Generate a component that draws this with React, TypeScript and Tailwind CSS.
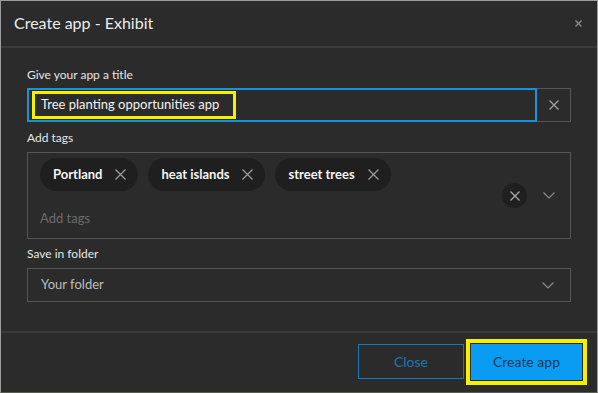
const XIcon = ({ size, color, width = 1.3 }: { size: number; color: string; width?: number }) => (
  <svg width={size} height={size} viewBox={`0 0 ${size} ${size}`} className="shrink-0">
    <path d={`M0.5 0.5L${size - 0.5} ${size - 0.5}M${size - 0.5} 0.5L0.5 ${size - 0.5}`} stroke={color} strokeWidth={width} />
  </svg>
);

const Chevron = ({ color }: { color: string }) => (
  <svg width="12" height="7" viewBox="0 0 12 7" className="shrink-0">
    <path d="M0.5 0.5L6 6L11.5 0.5" stroke={color} strokeWidth="1.2" fill="none" />
  </svg>
);

const tags = ["Portland", "heat islands", "street trees"];

const Label = ({ text }: { text: string }) => (
  <div className="text-[12px] leading-[16px] text-[#e6e6e6]">{text}</div>
);

export default function App() {
  return (
    <div
      className="w-[598px] h-[393px] bg-[#2b2b2b] border border-[#9c9c9c] border-b-[#55604f] flex flex-col"
      style={{ fontFamily: "Lato, 'Noto Sans', sans-serif" }}
    >
      <header className="h-[47px] shrink-0 flex items-center justify-between pl-[13px] pr-[15px] border-b-2 border-[#3a3a3a]">
        <h1 className="text-[16px] text-[#ececec] pb-[2px]">Create app - Exhibit</h1>
        <XIcon size={7} color="#8a8a8a" width={1.4} />
      </header>

      <main className="flex-1 px-[26px] pt-[19px] flex flex-col">
        <Label text="Give your app a title" />
        <div className="mt-[5px] flex h-[34px]">
          <div className="flex-1 border-2 border-[#1593dd] flex items-center pl-[3px]">
            <div className="h-[28px] w-[204px] border-[3px] border-[#f5f000] flex items-center pl-[6px] whitespace-nowrap text-[13px] text-[#f2f2f2]">
              Tree planting opportunities app
            </div>
          </div>
          <button className="w-[34px] border border-[#555] border-l-0 flex items-center justify-center">
            <XIcon size={10} color="#a0a0a0" />
          </button>
        </div>

        <div className="mt-[8px]">
          <Label text="Add tags" />
        </div>
        <div className="mt-[6px] h-[87px] border border-[#555] flex pl-[12px] pr-[15px]">
          <div className="flex-1 flex flex-col">
            <div className="mt-[5px] flex gap-[10px]">
              {tags.map(t => (
                <div key={t} className="h-[33px] rounded-full bg-[#1f1f1f] flex items-center pl-[13px] pr-[12px] gap-[13px]">
                  <span className="text-[13px] font-bold text-[#f4f4f4]">{t}</span>
                  <XIcon size={11} color="#9a9a9a" />
                </div>
              ))}
            </div>
            <div className="mt-[18px] text-[13px] text-[#6b6b6b]">Add tags</div>
          </div>
          <div className="flex items-center gap-[16px]">
            <div className="w-[25px] h-[25px] rounded-full bg-[#1f1f1f] flex items-center justify-center">
              <XIcon size={10} color="#a8a8a8" />
            </div>
            <Chevron color="#8a8a8a" />
          </div>
        </div>

        <div className="mt-[7px]">
          <Label text="Save in folder" />
        </div>
        <div className="mt-[6px] h-[34px] border border-[#555] flex items-center justify-between pl-[13px] pr-[16px]">
          <span className="text-[13px] text-[#bdbdbd]">Your folder</span>
          <Chevron color="#8a8a8a" />
        </div>
      </main>

      <footer className="h-[61px] shrink-0 border-t-2 border-[#3a3a3a] flex items-center justify-end gap-[2px] pr-[10px] pb-[2px]">
        <button className="w-[106px] h-[35px] border border-[#1479b8] text-[14px] text-[#1a78b4]">
          Close
        </button>
        <div className="border-[4px] border-[#f5f000] p-[1px]">
          <button className="w-[111px] h-[36px] bg-[#0a9cf2] text-[14px] text-[#1d3a4e]">
            Create app
          </button>
        </div>
      </footer>
    </div>
  );
}
